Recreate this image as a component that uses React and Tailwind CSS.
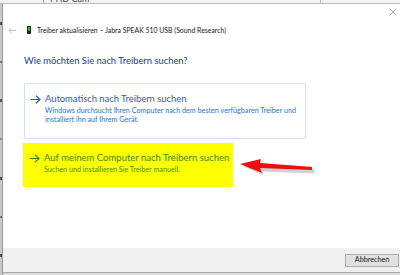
import React from "react";

const Arrow = ({ color }) => (
  <svg width="11" height="9" viewBox="0 0 11 9" className="shrink-0">
    <path d="M0.5 4.5 H10 M6 0.8 L10 4.5 L6 8.2" fill="none" stroke={color} strokeWidth="1.2" />
  </svg>
);

export default function App() {
  return (
    <div className="w-[400px] h-[275px] overflow-hidden relative bg-[#dcdcdc] flex flex-col" style={{ fontFamily: 'Lato, "Noto Sans", sans-serif' }}>
      {/* background window strip */}
      <div className="h-[4px] shrink-0 bg-[#f2f2f2] border-b border-[#bdbdbd] flex relative overflow-hidden">
        <div className="w-[43px] shrink-0" />
        <div className="w-[1px] h-full bg-[#9a9a9a]" />
        <div className="ml-[6px] -mt-[6px] text-[9px] leading-[10px] text-[#444]">PHD Cam</div>
        <div className="ml-auto mr-[79px] w-[1px] h-full bg-[#bdbdbd]" />
      </div>
      <div className="flex flex-1 min-h-0">
        {/* left strip */}
        <div className="w-[2px] shrink-0 bg-[#c8c8c8] flex flex-col justify-around">
          <div className="h-[3px] bg-[#555]" />
          <div className="h-[2px] bg-[#777]" />
          <div className="h-[3px] bg-[#555]" />
          <div className="h-[2px] bg-[#888]" />
          <div className="h-[3px] bg-[#555]" />
          <div className="h-[2px] bg-[#777]" />
          <div className="h-[3px] bg-[#555]" />
        </div>
        {/* dialog */}
        <div className="flex-1 flex flex-col bg-white border-l border-[#9a9a9a]">
          <div className="flex-1 flex flex-col">
            {/* title bar */}
            <div className="h-[16px] flex justify-end items-center pr-[3px]">
              <svg width="8" height="8" viewBox="0 0 8 8">
                <path d="M0.5 0.5 L7.5 7.5 M7.5 0.5 L0.5 7.5" stroke="#9a9a9a" strokeWidth="0.8" />
              </svg>
            </div>
            {/* header row */}
            <div className="h-[20px] flex items-center">
              <svg width="8" height="7" viewBox="0 0 8 7" className="ml-[5px]">
                <path d="M8 3.5 H1 M3.8 0.6 L1 3.5 L3.8 6.4" fill="none" stroke="#b0b0b0" strokeWidth="0.8" />
              </svg>
              <div className="ml-[11px] w-[4px] h-[8px] bg-[#1a1a1a] rounded-[1px] flex justify-center pt-[1px]">
                <div className="w-[2px] h-[4px] bg-[#19c019]" />
              </div>
              <div className="ml-[6px] text-[6.9px] leading-[10px] text-[#1a1a1a] whitespace-nowrap">
                Treiber aktualisieren – Jabra SPEAK 510 USB (Sound Research)
              </div>
            </div>
            {/* heading */}
            <div className="mt-[14px] ml-[21px] text-[9.4px] leading-[13px] text-[#1c3c94] whitespace-nowrap">
              Wie möchten Sie nach Treibern suchen?
            </div>
            {/* option 1 */}
            <div className="mt-[16px] ml-[21px] w-[282px] h-[56px] border border-[#cfe2f6] rounded-[1px] flex items-start pl-[5px] pt-[8px] gap-[4px]">
              <div className="mt-[3px]"><Arrow color="#1d64c3" /></div>
              <div className="flex flex-col">
                <div className="text-[9.4px] leading-[13px] text-[#1d64c3] whitespace-nowrap">Automatisch nach Treibern suchen</div>
                <div className="text-[7.2px] leading-[9px] text-[#2b74cc] whitespace-nowrap mt-[1px]">
                  Windows durchsucht Ihren Computer nach dem besten verfügbaren Treiber und
                </div>
                <div className="text-[7.2px] leading-[9px] text-[#2b74cc] whitespace-nowrap">
                  installiert ihn auf Ihrem Gerät.
                </div>
              </div>
            </div>
            {/* option 2 highlighted */}
            <div className="mt-[4px] ml-[20px] w-[210px] h-[44px] bg-[#ffff00] flex items-start pl-[6px] pt-[8px] gap-[4px]">
              <div className="mt-[3px]"><Arrow color="#3a8c06" /></div>
              <div className="flex flex-col">
                <div className="text-[9.5px] leading-[13px] text-[#3a8c06] whitespace-nowrap">Auf meinem Computer nach Treibern suchen</div>
                <div className="text-[7.2px] leading-[9px] text-[#3f9410] whitespace-nowrap mt-[1px]">
                  Suchen und installieren Sie Treiber manuell.
                </div>
              </div>
            </div>
          </div>
          {/* footer */}
          <div className="h-[24px] shrink-0 bg-[#f0f0f0] flex items-center justify-end pr-[1px]">
            <div className="w-[54px] h-[13px] bg-[#e1e1e1] border border-[#adadad] flex items-center justify-center text-[7.2px] text-[#1a1a1a]">
              Abbrechen
            </div>
          </div>
          <div className="h-[1px] shrink-0 bg-[#a8a8a8]" />
          <div className="h-[2px] shrink-0 bg-[#dcdcdc]" />
        </div>
      </div>
      {/* red annotation arrow */}
      <svg className="absolute left-[236px] top-[156px]" width="82" height="22" viewBox="0 0 82 22">
        <path d="M6 9 L26 5 L25 8 L77 12 L77 16 L25 14 L26 18 Z" fill="#9a9a9a" opacity="0.45" transform="translate(1.5 1.5)" />
        <path d="M4 8 L25 3 L24 7 L76 11 L76 14 L24 12 L26 17 Z" fill="#f20d0d" />
      </svg>
    </div>
  );
}
